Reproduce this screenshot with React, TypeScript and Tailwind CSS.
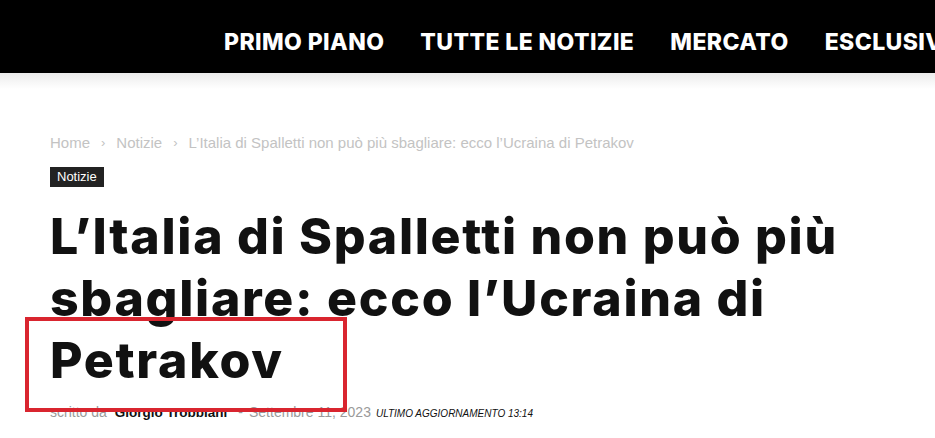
export default function App() {
  const nav = ["PRIMO PIANO", "TUTTE LE NOTIZIE", "MERCATO", "ESCLUSIVE"];
  return (
    <div className="relative w-[935px] h-[438px] overflow-hidden bg-white">
      {/* Top navigation */}
      <div className="h-[73px] bg-black flex items-center pt-[12px] pl-[224px] gap-[36px] overflow-hidden whitespace-nowrap">
        {nav.map((item) => (
          <span
            key={item}
            className="text-white text-[23px] font-extrabold tracking-[0.4px] [font-family:Inter,sans-serif]"
          >
            {item}
          </span>
        ))}
      </div>
      <div className="h-[16px] bg-gradient-to-b from-[#ececec] to-white" />

      <div className="pl-[50px] pt-[45px]">
        {/* Breadcrumb */}
        <div className="flex items-center gap-[11px] text-[15px] leading-[18px] text-[#c3c3c3] [font-family:'Liberation_Sans',Arial,sans-serif]">
          <span>Home</span>
          <span className="text-[13px]">›</span>
          <span>Notizie</span>
          <span className="text-[13px]">›</span>
          <span>L’Italia di Spalletti non può più sbagliare: ecco l’Ucraina di Petrakov</span>
        </div>

        {/* Category tag */}
        <div className="mt-[15px] inline-block bg-[#222222] text-white text-[13px] leading-[20px] px-[7px] [font-family:'Liberation_Sans',Arial,sans-serif]">
          Notizie
        </div>

        {/* Headline */}
        <h1 className="mt-[18px] w-[870px] text-[#111111] text-[50px] leading-[62px] font-extrabold tracking-[1.7px] [font-family:Inter,sans-serif]">
          L’Italia di Spalletti non può più sbagliare: ecco l’Ucraina di Petrakov
        </h1>

        {/* Byline */}
        <div className="mt-[11px] flex items-baseline whitespace-nowrap [font-family:'Liberation_Sans',Arial,sans-serif]">
          <span className="text-[14px] text-[#9a9a9a]">scritto da</span>
          <span className="ml-[8px] text-[13.5px] font-bold text-[#111111]">Giorgio Trobbiani</span>
          <span className="ml-[11px] text-[14px] text-[#9a9a9a]">-</span>
          <span className="ml-[6px] text-[14px] text-[#9a9a9a]">Settembre 11, 2023</span>
          <span className="ml-[5px] text-[10px] italic text-[#111111]">ULTIMO AGGIORNAMENTO 13:14</span>
        </div>
      </div>

      {/* Red highlight annotation */}
      <div className="absolute left-[25px] top-[317px] w-[322px] h-[95px] border-[4px] border-[#d9252f]" />
    </div>
  );
}
